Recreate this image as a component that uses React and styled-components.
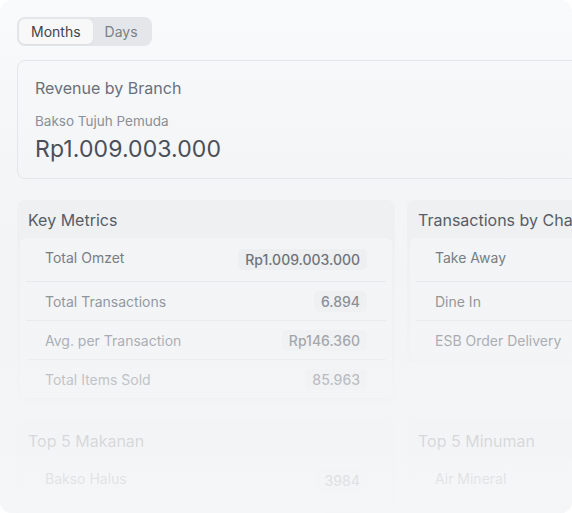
import React from 'react';
import styled, { createGlobalStyle } from 'styled-components';

const GlobalStyle = createGlobalStyle`
  html, body {
    margin: 0;
    padding: 0;
    background: #ffffff;
    font-family: Inter, "Noto Sans", sans-serif;
    -webkit-font-smoothing: antialiased;
  }
`;

const Frame = styled.div`
  position: relative;
  width: 572px;
  height: 513px;
  border-radius: 12px;
  overflow: hidden;
  background: linear-gradient(to bottom, #f9fafb 0%, #f4f5f6 32%, #f3f4f6 60%, #f4f5f6 100%);
`;

// the dashboard fades out towards the bottom edge
const Fade = styled.div`
  position: absolute;
  inset: 0;
  pointer-events: none;
  background: linear-gradient(
    to bottom,
    rgba(244, 245, 246, 0) 0%,
    rgba(244, 245, 246, 0) 46%,
    rgba(244, 245, 246, 0.45) 66%,
    rgba(244, 245, 246, 0.78) 82%,
    rgba(245, 246, 247, 0.9) 100%
  );
`;

const Page = styled.div`
  width: 802px;
  padding: 17px;
  box-sizing: border-box;
  display: flex;
  flex-direction: column;
  gap: 14px;
`;

const Tabs = styled.div`
  display: inline-flex;
  align-self: flex-start;
  padding: 2px;
  background: #e5e6e9;
  border-radius: 8px;
`;

const Tab = styled.button`
  border: none;
  font-family: inherit;
  font-size: 14px;
  padding: 0 12px;
  height: 25px;
  border-radius: 6px;
  cursor: pointer;
  background: ${(p) => (p.$active ? '#f8f8f9' : 'transparent')};
  color: ${(p) => (p.$active ? '#3f444d' : '#7b808a')};
  box-shadow: ${(p) => (p.$active ? '0 1px 2px rgba(0,0,0,0.04)' : 'none')};
`;

const RevenueCard = styled.section`
  border: 1px solid #e4e6e9;
  border-radius: 8px;
  padding: 17px 17px 14px;
  margin-bottom: 7px;
`;

const CardTitle = styled.h2`
  margin: 0 0 15px;
  font-size: 16px;
  font-weight: 400;
  color: #6b7079;
`;

const Branch = styled.div`
  font-size: 13.5px;
  color: #8a8f98;
  margin-bottom: 5px;
`;

const BigValue = styled.div`
  font-size: 23px;
  font-weight: 400;
  color: #4a4f58;
  letter-spacing: 0.1px;
  line-height: 30px;
`;

const Grid = styled.div`
  display: grid;
  grid-template-columns: 378px 378px;
  column-gap: 12px;
  row-gap: 19px;
`;

const Panel = styled.section`
  background: #eff0f2;
  border-radius: 8px;
  padding: 3px;
  align-self: ${(p) => (p.$top ? 'start' : 'stretch')};
`;

const PanelTitle = styled.h3`
  margin: 0;
  padding: 7px 8px 8px;
  font-size: 16px;
  font-weight: 400;
  color: #575c66;
`;

const List = styled.div`
  background: #f3f4f6;
  border-radius: 6px;
  padding: 0 6px;
`;

const Row = styled.div`
  display: flex;
  align-items: center;
  justify-content: space-between;
  height: ${(p) => (p.$first ? '44px' : '39px')};
  padding: 0 19px 0 19px;
  border-bottom: 1px solid #e3e5e8;
  box-sizing: border-box;

  &:last-child {
    border-bottom: ${(p) => (p.$open ? '1px solid #e3e5e8' : 'none')};
  }
`;

const Label = styled.span`
  font-size: 14px;
  color: #6b7079;
  margin-top: ${(p) => (p.$first ? '-5px' : '0')};
`;

const Pill = styled.span`
  font-size: 14px;
  font-weight: 500;
  color: #5f646d;
  background: #eceef0;
  border-radius: 5px;
  padding: 2px 7px;
`;

const metrics = [
  ['Total Omzet', 'Rp1.009.003.000'],
  ['Total Transactions', '6.894'],
  ['Avg. per Transaction', 'Rp146.360'],
  ['Total Items Sold', '85.963'],
];

const channels = [
  ['Take Away', '3.912'],
  ['Dine In', '2.104'],
  ['ESB Order Delivery', '878'],
];

export default function App() {
  return (
    <Frame>
      <GlobalStyle />
      <Page>
        <Tabs>
          <Tab $active>Months</Tab>
          <Tab>Days</Tab>
        </Tabs>

        <RevenueCard>
          <CardTitle>Revenue by Branch</CardTitle>
          <Branch>Bakso Tujuh Pemuda</Branch>
          <BigValue>Rp1.009.003.000</BigValue>
        </RevenueCard>

        <Grid>
          <Panel>
            <PanelTitle>Key Metrics</PanelTitle>
            <List>
              {metrics.map(([label, value], i) => (
                <Row key={label} $first={i === 0} $open>
                  <Label $first={i === 0}>{label}</Label>
                  <Pill>{value}</Pill>
                </Row>
              ))}
            </List>
          </Panel>
          <Panel $top>
            <PanelTitle>Transactions by Channel</PanelTitle>
            <List>
              {channels.map(([label, value], i) => (
                <Row key={label} $first={i === 0}>
                  <Label $first={i === 0}>{label}</Label>
                  <Pill>{value}</Pill>
                </Row>
              ))}
            </List>
          </Panel>

          <Panel>
            <PanelTitle>Top 5 Makanan</PanelTitle>
            <List>
              <Row $first>
                <Label $first>Bakso Halus</Label>
                <Pill>3984</Pill>
              </Row>
              <Row>
                <Label>Bakso Urat</Label>
                <Pill>2210</Pill>
              </Row>
            </List>
          </Panel>
          <Panel>
            <PanelTitle>Top 5 Minuman</PanelTitle>
            <List>
              <Row $first>
                <Label $first>Air Mineral</Label>
                <Pill>1520</Pill>
              </Row>
            </List>
          </Panel>
        </Grid>
      </Page>
      <Fade />
    </Frame>
  );
}
